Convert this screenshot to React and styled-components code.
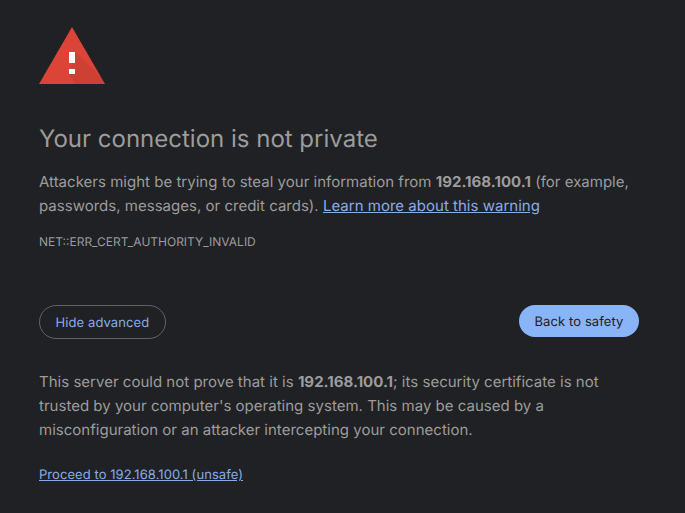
import styled, { createGlobalStyle } from "styled-components";

const Global = createGlobalStyle`
  html, body {
    margin: 0;
    background: #202124;
  }
`;

const Page = styled.div`
  box-sizing: border-box;
  width: 685px;
  height: 513px;
  padding: 27px 46px 0 39px;
  overflow: hidden;
  font-family: Inter, "Noto Sans", sans-serif;
  font-size: 15px;
  line-height: 24px;
  color: #9c9c9c;
  background: #202124;
  text-rendering: geometricPrecision;
`;

const Heading = styled.h1`
  margin: 40px 0 16px;
  font-size: 24px;
  font-weight: 400;
  line-height: 30px;
`;

const Text = styled.p`
  margin: 0;
  letter-spacing: 0.015px;
`;

const Bold = styled.strong`
  font-weight: 700;
`;

const Link = styled.a`
  color: #88ace9;
  font-size: ${(p) => (p.$small ? "13px" : "inherit")};
  letter-spacing: ${(p) => (p.$small ? "0.06px" : "inherit")};
  text-decoration: underline;
`;

const ErrorCode = styled.div`
  margin-top: 16px;
  font-size: 12px;
  line-height: 16px;
`;

const Buttons = styled.div`
  display: flex;
  justify-content: space-between;
  align-items: flex-start;
  margin-top: 55px;
  margin-bottom: 31px;
`;

const Button = styled.button`
  box-sizing: border-box;
  height: ${(p) => (p.$primary ? "32px" : "34px")};
  padding: 2px 15.5px 0;
  border-radius: 17px;
  border: ${(p) => (p.$primary ? "none" : "1px solid #5f6368")};
  background: ${(p) => (p.$primary ? "#8ab4f8" : "transparent")};
  color: ${(p) => (p.$primary ? "#202124" : "#88ace9")};
  font-family: inherit;
  font-size: 13px;
  font-weight: 400;
  letter-spacing: 0.1px;
  text-rendering: geometricPrecision;
`;

const ProceedRow = styled.div`
  margin-top: 24px;
  line-height: 16px;
`;

const WarningIcon = () => (
  <svg width="66" height="57" viewBox="0 0 66 57" style={{ display: "block" }}>
    <path d="M33 0 L66 57 H0 Z" fill="#db4437" />
    <path d="M36 25 L60 47.6 L66 57 H36 L30 47 Z" fill="#000" opacity="0.06" />
    <rect x="30" y="25" width="6" height="11" fill="#fff" />
    <rect x="30" y="42" width="6" height="5" fill="#fff" />
  </svg>
);

export default function App() {
  return (
    <>
      <Global />
      <Page>
        <WarningIcon />
        <Heading>Your connection is not private</Heading>
        <Text>
          Attackers might be trying to steal your information from <Bold>192.168.100.1</Bold> (for example,
          passwords, messages, or credit cards). <Link href="#">Learn more about this warning</Link>
        </Text>
        <ErrorCode>NET::ERR_CERT_AUTHORITY_INVALID</ErrorCode>
        <Buttons>
          <Button>Hide advanced</Button>
          <Button $primary>Back to safety</Button>
        </Buttons>
        <Text>
          This server could not prove that it is <Bold>192.168.100.1</Bold>; its security certificate is not
          trusted by your computer's operating system. This may be caused by a misconfiguration or an attacker
          intercepting your connection.
        </Text>
        <ProceedRow>
          <Link href="#" $small>Proceed to 192.168.100.1 (unsafe)</Link>
        </ProceedRow>
      </Page>
    </>
  );
}
